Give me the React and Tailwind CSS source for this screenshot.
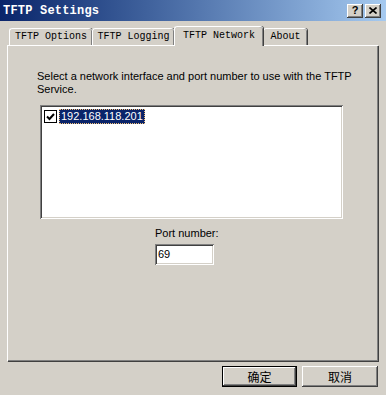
import React from "react";

const raised =
  "shadow-[inset_-1px_-1px_0_#404040,inset_1px_1px_0_#ffffff,inset_-2px_-2px_0_#808080,inset_2px_2px_0_#d4d0c8]";
const sunken =
  "shadow-[inset_1px_1px_0_#808080,inset_-1px_-1px_0_#ffffff,inset_2px_2px_0_#404040,inset_-2px_-2px_0_#d4d0c8]";

function Tab({ label, w, selected }) {
  return (
    <div
      className={
        "relative flex justify-center rounded-t-[3px] border-l border-t border-white bg-[#d4d0c8] shadow-[inset_-1px_0_0_#808080,1px_0_0_#404040] " +
        (selected ? "z-10 mb-[-1px] h-[20px] pt-[2px] " : "h-[17px] pt-[1px] ")
      }
      style={{ width: w }}
    >
      <span className="text-[10px] leading-[13px] text-black [font-family:'Liberation_Mono',monospace]">
        {label}
      </span>
    </div>
  );
}

export default function App() {
  return (
    <div className="relative flex h-[395px] w-[386px] flex-col overflow-hidden bg-[#d4d0c8] [font-family:'Liberation_Sans',Arial,sans-serif]">
      {/* Title bar */}
      <div className="flex h-[21px] items-center justify-between bg-gradient-to-r from-[#0a246a] to-[#a6caf0] pl-[3px] pr-[5px]">
        <span className="text-[12px] font-bold leading-none tracking-[0.2px] text-white [font-family:'Liberation_Mono',monospace]">
          TFTP Settings
        </span>
        <div className="flex gap-[2px]">
          <div className={"flex h-[14px] w-[16px] items-center justify-center bg-[#d4d0c8] " + raised}>
            <span className="text-[11px] font-bold leading-none text-black">?</span>
          </div>
          <div className={"flex h-[14px] w-[16px] items-center justify-center bg-[#d4d0c8] " + raised}>
            <svg width="8" height="7" viewBox="0 0 8 7">
              <path d="M0.5 0.5 L7.5 6.5 M7.5 0.5 L0.5 6.5" stroke="#000" strokeWidth="1.6" />
            </svg>
          </div>
        </div>
      </div>

      {/* Tabs */}
      <div className="mt-[5px] flex h-[19px] items-end pl-[9px]">
        <Tab label="TFTP Options" w={83} />
        <Tab label="TFTP Logging" w={82} />
        <Tab label="TFTP Network" w={89} selected />
        <Tab label="About" w={44} />
      </div>

      {/* Panel */}
      <div className="ml-[7px] flex h-[316px] w-[371px] flex-col border-l border-t border-white shadow-[inset_-1px_-1px_0_#808080,1px_1px_0_#404040]">
        <p className="ml-[29px] mt-[24px] w-[320px] text-[11px] leading-[13px] text-black">
          Select a network interface and port number to use with the TFTP Service.
        </p>
        <div className={"ml-[32px] mt-[9px] h-[114px] w-[303px] bg-white p-[3px] " + sunken}>
          <div className="flex items-center pl-[1px] pt-[1px]">
            <div className="flex h-[13px] w-[13px] items-center justify-center border border-black bg-white">
              <svg width="9" height="8" viewBox="0 0 9 8">
                <path d="M1 3.5 L3.5 6 L8 1" stroke="#000" strokeWidth="2" fill="none" />
              </svg>
            </div>
            <div className="ml-[2px] h-[15px] border border-dotted border-[#f2c078] bg-[#0a246a] px-[1px]">
              <span className="block text-[11px] leading-[13px] text-white">192.168.118.201</span>
            </div>
          </div>
        </div>
        <div className="ml-[147px] mt-[8px] text-[11px] leading-[13px] text-black">Port number:</div>
        <div className={"ml-[147px] mt-[4px] flex h-[21px] w-[59px] items-center bg-white pl-[3px] " + sunken}>
          <span className="text-[11px] leading-none text-black">69</span>
        </div>
      </div>

      {/* Buttons */}
      <div className="mt-[5px] flex justify-end gap-[5px] pr-[8px]">
        <div className="flex h-[21px] w-[75px] items-center justify-center border border-black bg-[#d4d0c8] shadow-[inset_-1px_-1px_0_#404040,inset_1px_1px_0_#ffffff,inset_-2px_-2px_0_#808080]">
          <span className="text-[12px] leading-none text-black [font-family:'Noto_Sans_CJK_SC',sans-serif]">确定</span>
        </div>
        <div className={"flex h-[21px] w-[76px] items-center justify-center bg-[#d4d0c8] " + raised}>
          <span className="text-[12px] leading-none text-black [font-family:'Noto_Sans_CJK_SC',sans-serif]">取消</span>
        </div>
      </div>
    </div>
  );
}
